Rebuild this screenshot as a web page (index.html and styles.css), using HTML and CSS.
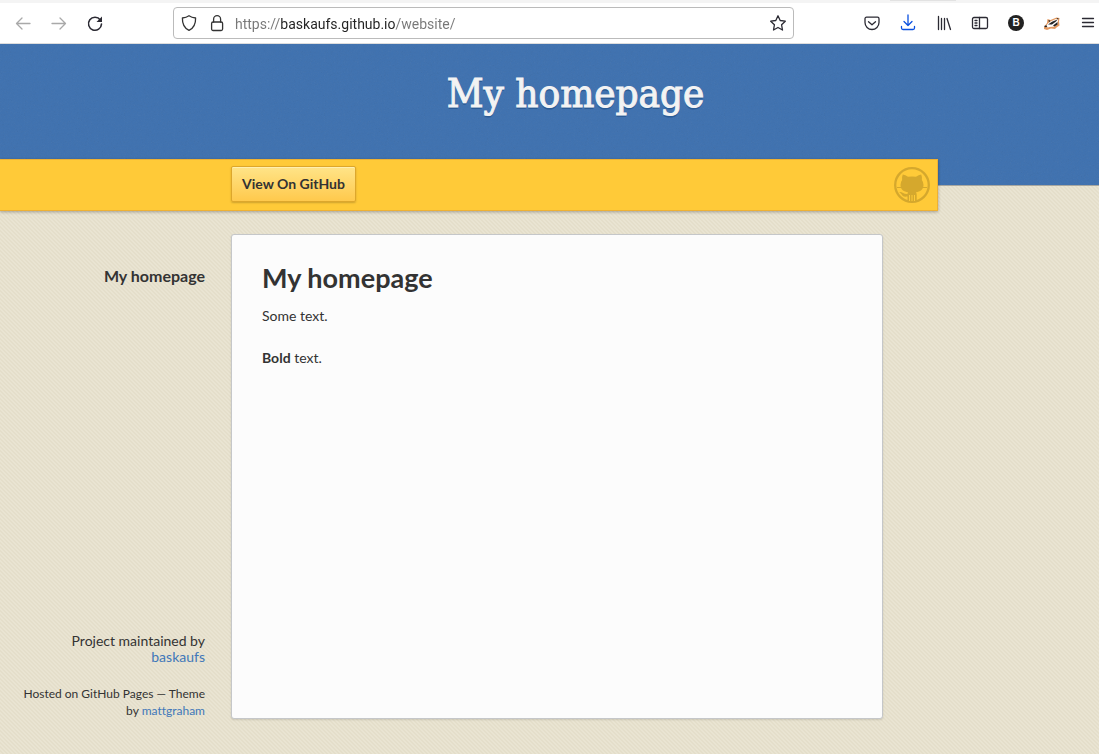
FILE: index.html
```html
<!DOCTYPE html>
<html lang="en">
<head>
<meta charset="utf-8">
<meta name="viewport" content="width=device-width, initial-scale=1">
<title>My homepage</title>
<link rel="stylesheet" href="styles.css">
</head>
<body>
<div class="window">
  <div class="tabstrip"></div>
  <div class="toolbar">
    <div class="tools">
      <button class="tool faded" type="button" aria-label="Back"><svg viewBox="0 0 20 20"><path d="M17 10.500H3.500M9 5l-5.500 5.500L9 16"/></svg></button>
      <button class="tool faded" type="button" aria-label="Forward"><svg viewBox="0 0 20 20"><path d="M3 10.500h13.500M11 5l5.500 5.500L11 16"/></svg></button>
      <button class="tool" type="button" aria-label="Reload"><svg viewBox="0 0 20 20"><path class="heavy" d="M15.300 7A6.500 6.500 0 1 0 16.500 11"/><path class="solid" d="M17 3.500v5.500h-5.500z"/></svg></button>
    </div>
    <div class="address">
      <svg class="glyph" viewBox="0 0 20 20"><path d="M10 2.700c2 1.400 4 2 6.600 2.300.2 6-1.600 10-6.600 12.400C5 15 3.200 11 3.400 5 6 4.700 8 4.100 10 2.700z"/></svg>
      <svg class="glyph" viewBox="0 0 20 20"><rect x="4.600" y="9" width="11" height="8.500" rx="1.500"/><path d="M6.600 9V6.200a3.500 3.500 0 0 1 7 0V9"/></svg>
      <input class="url" type="text" aria-label="Address" value="https://baskaufs.github.io/website/">
      <button class="tool" type="button" aria-label="Bookmark"><svg viewBox="0 0 20 20"><path d="M10 2.800l2.200 4.700 5.100.7-3.700 3.600.9 5.200-4.500-2.500L5.500 17l.9-5.200-3.700-3.600 5.100-.7z"/></svg></button>
    </div>
    <div class="tools">
      <button class="tool" type="button" aria-label="Pocket"><svg viewBox="0 0 20 20"><path d="M4.500 4.200h11a1.500 1.500 0 0 1 1.500 1.500v3.800a7 7 0 0 1-14 0V5.700a1.500 1.500 0 0 1 1.500-1.500z"/><path d="M6.500 8.700L10 11.800l3.500-3.100"/></svg></button>
      <button class="tool blue" type="button" aria-label="Downloads"><svg viewBox="0 0 20 20"><path d="M10 2v10.500M6 8.500l4 4 4-4M3.500 13.500V15A1.500 1.500 0 0 0 5 16.500h10a1.500 1.500 0 0 0 1.500-1.500v-1.500"/></svg></button>
      <button class="tool" type="button" aria-label="Library"><svg viewBox="0 0 20 20"><path d="M4.500 3.500v13M7.500 5.500v11M10.500 5.500v11M13 5.500l3.500 11"/></svg></button>
      <button class="tool" type="button" aria-label="Sidebar"><svg viewBox="0 0 20 20"><rect x="2.500" y="4.500" width="15" height="11" rx="1.500"/><path d="M9.500 4.500v11M5 7.500h2M5 10h2M5 12.500h2"/></svg></button>
      <button class="tool" type="button" aria-label="Extension"><span class="badge">B</span></button>
      <button class="tool" type="button" aria-label="Privacy Badger"><svg viewBox="0 0 20 20"><path class="rust" d="M2 14l3-4 .5-4 3 1 6-2.500 3 .5-.5 3.500.5 4-3 2-1.500 1.500-4-.5-4 1.500-3-1z"/><path class="cream" d="M3.500 13.500l3-3.500 2-1.500 5.500-2.500 2 .5-.5 4.500-3 2.500-5 .5-1.500.5z"/><path class="dark" d="M2 13l2.500-.8.8 1.600-2 .4zM6 11.500l4-2.800 5.500-2.200-1.500 2-4 3zM11 12.500l4.500-3.500v2.500l-3 2zM6.500 7l2 .8-1.500 1.500zM14.500 5l2 .3-.5 1.300z"/></svg></button>
      <button class="tool" type="button" aria-label="Menu"><svg viewBox="0 0 20 20"><path d="M4.500 5.500h11M4.500 9.500h11M4.500 13.500h11"/></svg></button>
    </div>
  </div>
  <header class="banner"><h1 class="title">My homepage</h1></header>
  <nav class="bar">
    <a class="view" href="#">View On GitHub</a>
    <svg class="octocat" viewBox="0 0 36 36" aria-hidden="true"><circle cx="18" cy="18" r="16.800"/><path class="line" d="M3 20.500h30"/><path class="cat" d="M8.800 7.500q2.500.5 5.200 2.300 4-.8 8 0 2.700-1.800 5.200-2.300 1.300 3 .7 5.500Q29.500 15 29.500 18c0 4.500-3.500 6.800-7.500 7.300q.7 1 .7 2.700v6.500h-9.200V29.500c-4 .6-5-.5-6.200-2.500L5.200 25c3-.6 4 2.200 8.300 2q0-1 .6-1.700C10 24.800 6.500 22.500 6.500 18q0-3 1.600-5Q7.500 10.500 8.800 7.500z"/><path class="gap" d="M15.500 28v6M18 28v6M20.500 28v6"/></svg>
  </nav>
  <div class="layout">
    <aside class="side">
      <p class="name">My homepage</p>
      <footer class="foot">
        <p class="owner">Project maintained by <a class="link" href="#">baskaufs</a></p>
        <p class="host"><span>Hosted on GitHub Pages — Theme</span> <span>by</span> <a class="link" href="#">mattgraham</a></p>
      </footer>
    </aside>
    <main class="page">
      <h2 class="heading">My homepage</h2>
      <p class="para">Some text.</p>
      <p class="para"><strong>Bold</strong> text.</p>
    </main>
  </div>
</div>
</body>
</html>
```
FILE: styles.css
```css
* { box-sizing: border-box; margin: 0; padding: 0; }
body {
  font-family: Lato, "Open Sans", sans-serif;
  font-size: 14px;
  line-height: 21px;
  color: #333;
  background: linear-gradient(45deg, #e4deca 25%, #e9e4d2 25% 50%, #e4deca 50% 75%, #e9e4d2 75%) 0 0 / 4px 4px;
  font-variant-ligatures: none;
}
.window { display: flex; flex-direction: column; min-height: 100vh; }
.tabstrip { height: 3px; background: linear-gradient(90deg, transparent 81%, #e2e2e2 81% 87%, transparent 87%) 0 0 / 100% 1px no-repeat #f4f4f4; }
.toolbar {
  display: flex;
  align-items: center;
  height: 41px;
  padding: 0 1px 0 13px;
  background: #fff;
  border-bottom: 1px solid #ddd;
}
.tools { display: flex; gap: 16px; }
.tool {
  display: flex;
  align-items: center;
  justify-content: center;
  width: 20px;
  height: 20px;
  border: 0;
  background: none;
  color: #2b2a33;
}
.tool svg, .glyph { width: 20px; height: 20px; fill: none; stroke: currentColor; stroke-width: 1.3; stroke-linejoin: round; stroke-linecap: round; }
.tool .solid { fill: currentColor; stroke: none; }
.tool .heavy { stroke-width: 1.6; }
.faded { color: #a9a9a9; }
.blue { color: #0a50e0; }
.badge { width: 16px; height: 16px; border-radius: 50%; background: #222; color: #fff; font: bold 10px/16px "Liberation Sans", sans-serif; }
.tool .rust { fill: #e39a62; stroke: none; }
.tool .cream { fill: #fff; stroke: none; }
.tool .dark { fill: #252525; stroke: none; }
.address {
  display: flex;
  align-items: center;
  gap: 8px;
  flex: 1;
  height: 32px;
  margin: 0 68px;
  padding: 0 5px;
  border: 1px solid #bbb;
  border-radius: 4px;
}
.url {
  flex: 1;
  min-width: 0;
  height: 26px;
  padding-top: 2px;
  border: 0;
  outline: 0;
  font: 14px/24px Roboto, "Liberation Sans", sans-serif;
  color: transparent;
  background: linear-gradient(90deg, #777 0 46px, #222 46px 161px, #777 161px);
  -webkit-background-clip: text;
  background-clip: text;
}
.banner {
  height: 142px;
  padding-top: 20px;
  text-align: center;
  background: #4072b0 url("data:image/svg+xml,%3Csvg xmlns='http://www.w3.org/2000/svg' width='100' height='100'%3E%3Cfilter id='n'%3E%3CfeTurbulence baseFrequency='.7' stitchTiles='stitch'/%3E%3CfeColorMatrix type='saturate' values='0'/%3E%3C/filter%3E%3Crect width='100' height='100' filter='url(%23n)' opacity='.1'/%3E%3C/svg%3E");
  border-bottom: 1px solid #a7a7a0;
}
.title {
  padding-left: 52px;
  font: 40px/58px "DejaVu Serif Condensed", "DejaVu Serif", serif;
  color: #f3f3f3;
  -webkit-text-stroke: 1px #f3f3f3;
  text-shadow: 0 2px 0 #2b5b95;
}
.bar {
  display: flex;
  align-items: center;
  justify-content: space-between;
  height: 52px;
  margin: -27px 161px 0 0;
  padding: 0 7px 0 231px;
  background: #ffca38;
  border: solid #eeb133;
  border-width: 1px 1px 1px 0;
  box-shadow: 0 1px 3px rgba(0, 0, 0, .3);
  z-index: 1;
}
.view {
  margin-bottom: 2px;
  padding: 0 10px;
  font-weight: 700;
  line-height: 34px;
  color: #333;
  text-decoration: none;
  background: linear-gradient(#ffe488, #ffc94c);
  border: 1px solid #dda72c;
  border-radius: 2px;
  box-shadow: inset 0 1px 0 #fff0b0, 0 1px 2px rgba(0, 0, 0, .2);
}
.octocat { width: 36px; height: 36px; fill: none; stroke: #d5a82d; stroke-width: 2.3; }
.octocat .line { stroke-width: 1; }
.octocat .cat { fill: #d5a82d; stroke: none; }
.octocat .gap { stroke: #ffca38; stroke-width: 1; }
.layout {
  flex: 1;
  display: grid;
  grid-template-columns: 205px 1fr;
  gap: 26px;
  padding: 23px 216px 35px 0;
}
.side { display: flex; flex-direction: column; justify-content: space-between; padding-top: 31px; text-align: right; }
.name { font-size: 16px; font-weight: 700; }
.owner { padding-left: 60px; line-height: 16px; margin-bottom: 20px; }
.host { padding-left: 20px; font-size: 12px; line-height: 17px; }
.link { color: #4077b9; text-decoration: none; }
.page { padding: 25px 30px; background: #fcfcfc; border: 1px solid #c5c7c9; border-radius: 3px; box-shadow: 0 1px 2px rgba(0, 0, 0, .12); }
.heading { font-size: 27px; line-height: 36px; margin-bottom: 9px; }
.para { margin-bottom: 21px; }
```
